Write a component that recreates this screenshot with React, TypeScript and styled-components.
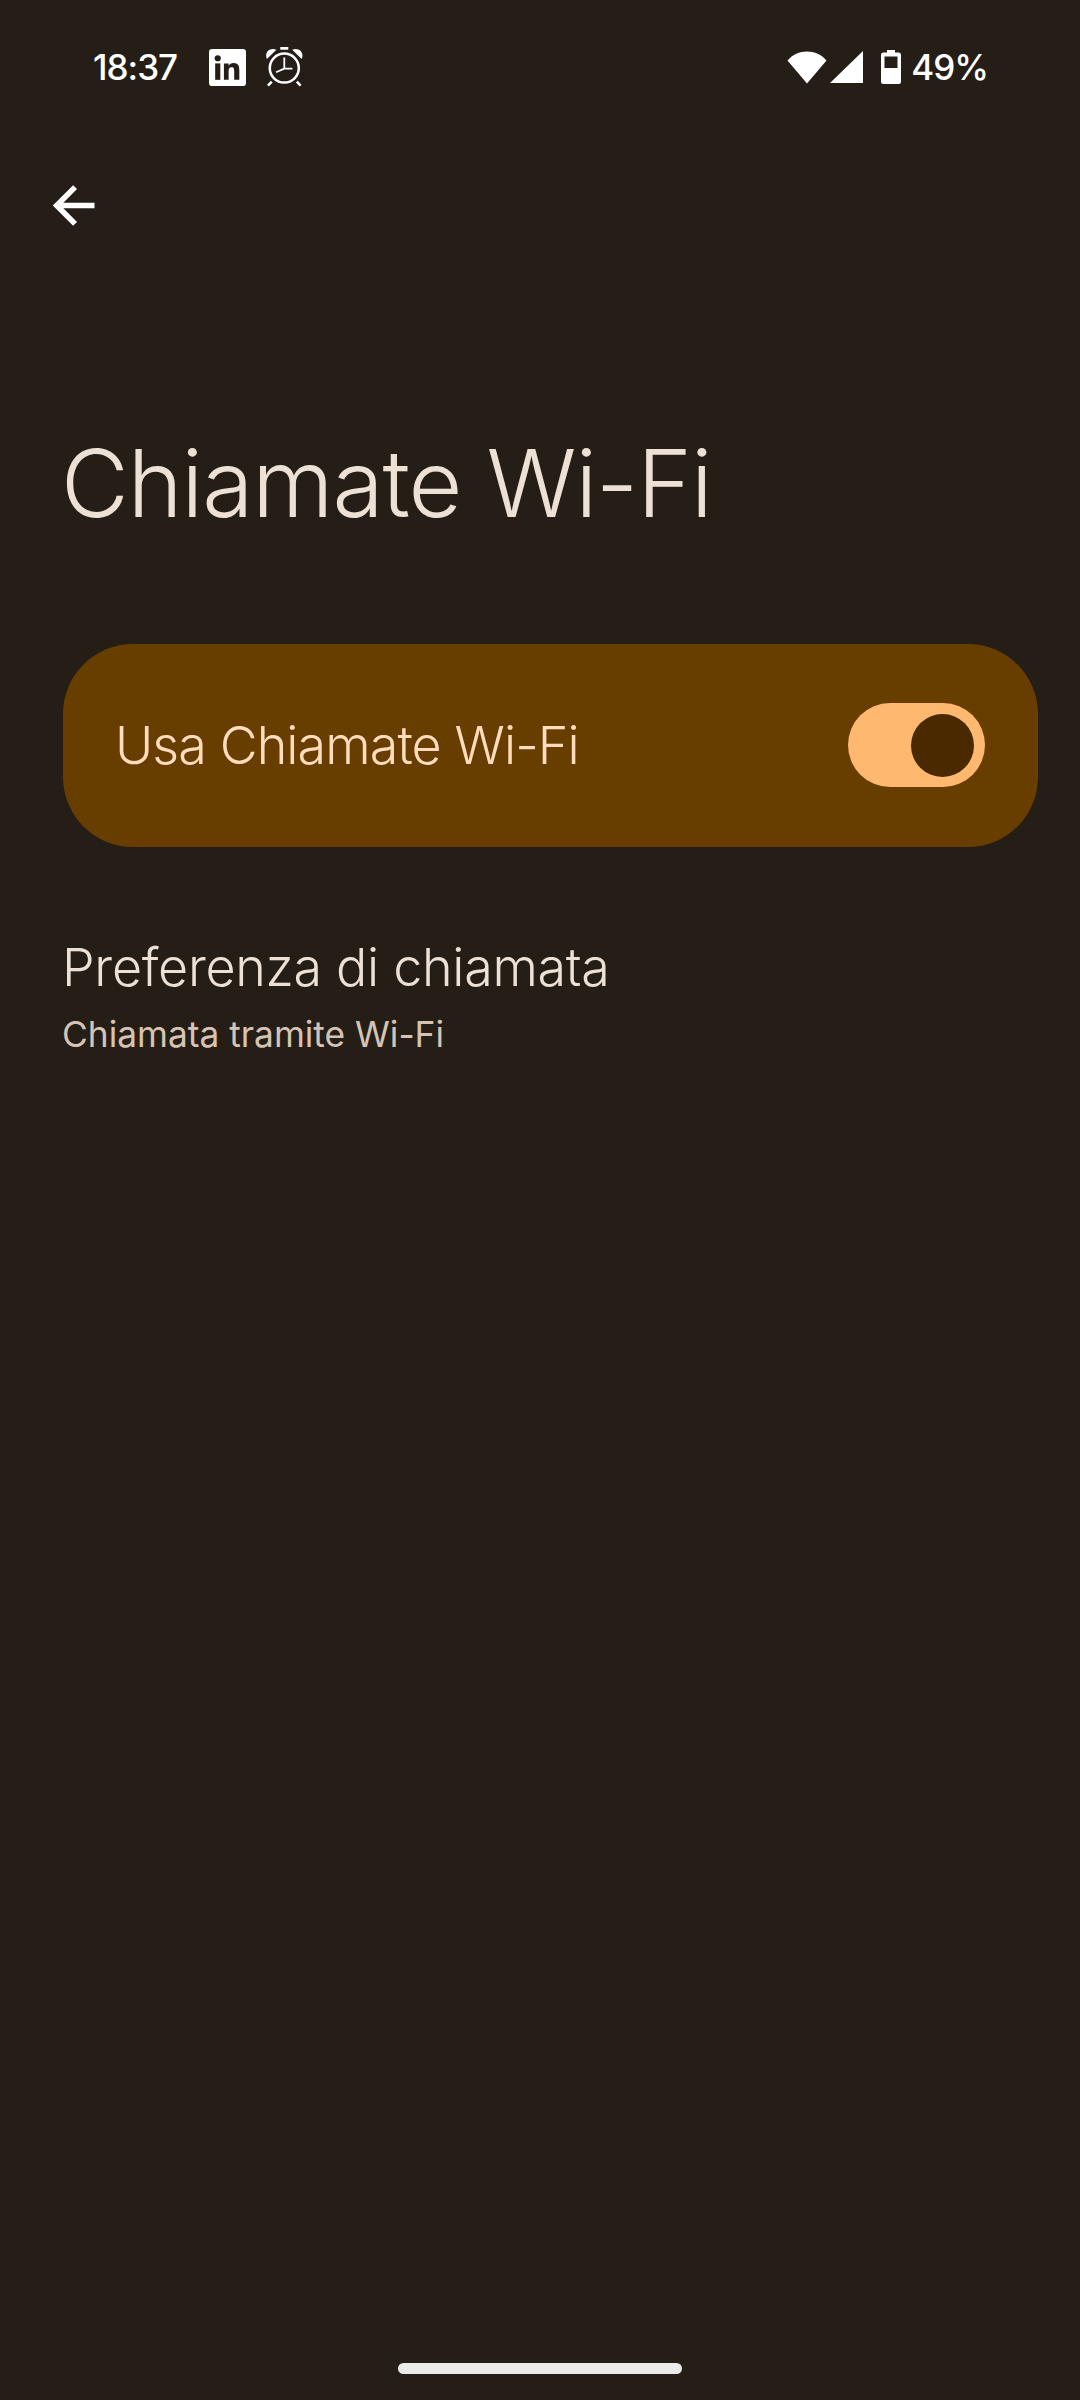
import React from 'react';
import styled, { createGlobalStyle } from 'styled-components';

const GlobalStyle = createGlobalStyle`
  html, body {
    margin: 0;
    padding: 0;
    background: #241e17;
  }
`;

const FONT = `'Inter', 'Noto Sans', sans-serif`;

const Page = styled.div`
  width: 1080px;
  height: 2400px;
  display: flex;
  flex-direction: column;
  background: #241e17;
  font-family: ${FONT};
  overflow: hidden;
`;

const StatusBar = styled.div`
  height: 134px;
  box-sizing: border-box;
  padding: 0 92px 0 93px;
  display: flex;
  align-items: center;
  justify-content: space-between;
  color: #ffffff;
`;

const StatusGroup = styled.div`
  display: flex;
  align-items: center;
`;

const StatusText = styled.span`
  font-size: 35px;
  font-weight: 500;
  line-height: 44px;
  letter-spacing: -1px;
`;

const BackRow = styled.div`
  height: 142px;
  box-sizing: border-box;
  padding: 40px 0 0 42px;
  display: flex;
  align-items: flex-start;
`;

const Title = styled.h1`
  margin: 151px 0 0 61px;
  font-size: 93px;
  font-weight: 300;
  line-height: 112px;
  color: #ede0d5;
  letter-spacing: -1px;
`;

const ToggleCard = styled.div`
  margin: 105px 0 0 63px;
  width: 975px;
  height: 203px;
  box-sizing: border-box;
  padding: 0 53px 0 52px;
  border-radius: 70px;
  background: #683d00;
  display: flex;
  align-items: center;
  justify-content: space-between;
`;

const CardLabel = styled.span`
  font-size: 52px;
  font-weight: 300;
  letter-spacing: -0.9px;
  color: #ffdcbe;
`;

const Track = styled.div`
  width: 137px;
  height: 84px;
  margin-bottom: 1px;
  box-sizing: border-box;
  padding-right: 11px;
  border-radius: 42px;
  background: #ffb870;
  display: flex;
  align-items: center;
  justify-content: flex-end;
`;

const Thumb = styled.div`
  width: 63px;
  height: 63px;
  border-radius: 50%;
  background: #4a2800;
`;

const PrefItem = styled.div`
  margin: 90px 0 0 62px;
`;

const PrefTitle = styled.div`
  font-size: 52px;
  font-weight: 300;
  letter-spacing: -0.3px;
  line-height: 62px;
  color: #ede0d5;
`;

const PrefSub = styled.div`
  margin-top: 13px;
  font-size: 35.3px;
  font-weight: 400;
  line-height: 46px;
  color: #d7c3b4;
`;

const HomeBar = styled.div`
  margin: auto auto 26px;
  width: 284px;
  height: 11px;
  border-radius: 6px;
  background: #ebebeb;
`;

const LinkedinIcon = styled.svg`
  width: 37px;
  height: 37px;
  margin-left: 32px;
`;

const AlarmIcon = styled.svg`
  width: 39px;
  height: 40px;
  margin-left: 19px;
`;

const WifiIcon = styled.svg`
  width: 40px;
  height: 33px;
`;

const SignalIcon = styled.svg`
  width: 33px;
  height: 32px;
  margin-left: 3px;
`;

const BatteryIcon = styled.svg`
  width: 20px;
  height: 34px;
  margin-left: 18px;
  margin-right: 10px;
`;

const BackIcon = styled.svg`
  width: 63px;
  height: 63px;
`;

export default function App() {
  return (
    <Page>
      <GlobalStyle />
      <StatusBar>
        <StatusGroup>
          <StatusText>18:37</StatusText>
          <LinkedinIcon viewBox="0 0 36 36">
            <rect width="36" height="36" rx="3" fill="#fff" />
            <circle cx="8.500" cy="9" r="3" fill="#241e17" />
            <rect x="6" y="14" width="5" height="16" fill="#241e17" />
            <path
              d="M14.500 14h4.600v2.200c.8-1.400 2.500-2.600 4.800-2.600 4.600 0 5.600 3 5.600 7V30h-5v-8.200c0-2-.1-4-2.500-4-2.500 0-2.900 1.900-2.900 3.900V30h-4.600z"
              fill="#241e17"
            />
          </LinkedinIcon>
          <AlarmIcon viewBox="0 0 37 38" fill="none">
            <circle cx="18.300" cy="20" r="13.800" stroke="#fff" strokeWidth="2.400" />
            <path d="M18.300 10V20.500H26M18.300 20.500L10.500 24" stroke="#fff" strokeWidth="1.700" />
            <path d="M1.800 11.500C-1 5 4.500 0 10.800 2.500z M34.800 11.500C37.600 5 32.100 0 25.800 2.500z" fill="#fff" />
            <path d="M2.800 36.800l3.600-3.800M33.800 36.800l-3.600-3.800" stroke="#fff" strokeWidth="2.400" />
            <rect x="14.500" y="0" width="7.600" height="2.600" fill="#fff" />
          </AlarmIcon>
        </StatusGroup>
        <StatusGroup>
          <WifiIcon viewBox="0 0 40 33">
            <path d="M0.500 9.500C5.500 3.500 12.500 0.500 20 0.500S34.500 3.500 39.500 9.500L20 32.500z" fill="#fff" />
          </WifiIcon>
          <SignalIcon viewBox="0 0 32 32" preserveAspectRatio="none">
            <path d="M32 0V32H0z" fill="#fff" />
          </SignalIcon>
          <BatteryIcon viewBox="0 0 20 34">
            <path
              fillRule="evenodd"
              d="M6 0h8v2.500h3.500A2.500 2.500 0 0 1 20 5v26.500a2.500 2.500 0 0 1-2.500 2.500h-15A2.500 2.500 0 0 1 0 31.500V5a2.500 2.500 0 0 1 2.500-2.500H6zM3.500 6.500v11.500h13V6.500z"
              fill="#fff"
            />
          </BatteryIcon>
          <StatusText>49%</StatusText>
        </StatusGroup>
      </StatusBar>
      <BackRow>
        <BackIcon viewBox="0 0 24 24" fill="none">
          <path d="M20 12H5.500M12.600 5 5.600 12l7 7" stroke="#fff" strokeWidth="2.100" />
        </BackIcon>
      </BackRow>
      <Title>Chiamate Wi-Fi</Title>
      <ToggleCard>
        <CardLabel>Usa Chiamate Wi-Fi</CardLabel>
        <Track>
          <Thumb />
        </Track>
      </ToggleCard>
      <PrefItem>
        <PrefTitle>Preferenza di chiamata</PrefTitle>
        <PrefSub>Chiamata tramite Wi-Fi</PrefSub>
      </PrefItem>
      <HomeBar />
    </Page>
  );
}
